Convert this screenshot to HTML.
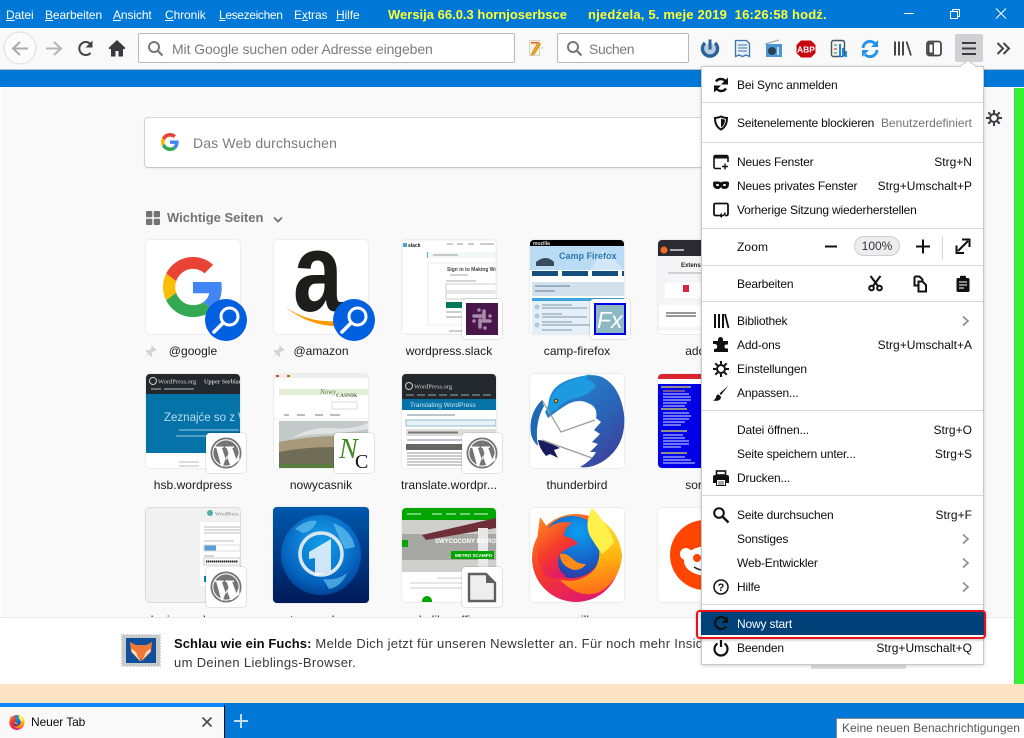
<!DOCTYPE html>
<html lang="de"><head><meta charset="utf-8"><title>Neuer Tab</title>
<style>
html,body{margin:0;padding:0;width:1024px;height:738px;overflow:hidden;background:#f9f9fa}
body{font-family:"Liberation Sans",sans-serif;font-size:12px;color:#0c0c0d;position:relative}
div,svg,span.a{position:absolute}
svg{overflow:visible;display:block}
.m{top:7px;height:16px;line-height:16px;color:#fff;white-space:nowrap;letter-spacing:-.1px}
.y{top:7px;height:16px;line-height:16px;color:#ffff33;font-weight:bold;font-size:13px;white-space:pre}
.box{background:#fff;border:1px solid #b8b8b8;border-radius:2px;box-sizing:border-box}
.ph{color:#7b7b80;font-size:14px;line-height:18px;white-space:nowrap}
.t{position:absolute;width:94px;height:94px;background:#fff;border-radius:4px;overflow:hidden;box-shadow:0 0 0 1px rgba(0,0,0,.05)}
.t svg{left:0;top:0;width:94px;height:94px}
.l{position:absolute;width:124px;text-align:center;white-space:nowrap;height:16px;line-height:16px;font-size:12px;letter-spacing:.03px;color:#1a1a1e}
.b{position:absolute;width:40px;height:40px;background:#fff;border-radius:4px;box-shadow:0 0 0 1px rgba(0,0,0,.09)}
.s{position:absolute;width:42px;height:42px;border-radius:50%;background:#0060df}
.i{left:8px;top:4px;width:32px;height:32px}
.r{left:36px;height:16px;line-height:16px;white-space:nowrap;letter-spacing:-.17px;font-size:12px}
.k{right:12px;height:16px;line-height:16px;white-space:nowrap;letter-spacing:.02px;font-size:12px}
.sep{left:1px;width:281px;height:1px;background:#d7d7db}
.ic{left:12px;width:16px;height:16px}
.ch{left:258px;width:12px;height:12px}
</style></head><body>
<svg width="0" height="0" style="position:absolute"><defs>
<symbol id="g" viewBox="0 0 48 48"><path fill="#EA4335" d="M24 9.5c3.54 0 6.71 1.22 9.21 3.6l6.85-6.85C35.9 2.38 30.47 0 24 0 14.62 0 6.51 5.38 2.56 13.22l7.98 6.19C12.43 13.72 17.74 9.5 24 9.5z"/><path fill="#4285F4" d="M46.98 24.55c0-1.57-.15-3.09-.38-4.55H24v9.02h12.94c-.58 2.96-2.26 5.48-4.78 7.18l7.73 6c4.51-4.18 7.09-10.36 7.09-17.65z"/><path fill="#FBBC05" d="M10.53 28.59c-.48-1.45-.76-2.99-.76-4.59s.27-3.14.76-4.59l-7.98-6.19C.92 16.46 0 20.12 0 24c0 3.88.92 7.54 2.56 10.78l7.97-6.19z"/><path fill="#34A853" d="M24 48c6.48 0 11.93-2.13 15.89-5.81l-7.73-6c-2.15 1.45-4.92 2.3-8.16 2.3-6.26 0-11.57-4.22-13.47-9.91l-7.98 6.19C6.51 42.62 14.62 48 24 48z"/></symbol>
<symbol id="mag" viewBox="0 0 42 42"><circle cx="24.5" cy="17.5" r="8.5" fill="none" stroke="#fff" stroke-width="3"/><path d="M18 24L9 33" stroke="#fff" stroke-width="3.6" stroke-linecap="round"/></symbol>
<symbol id="wp" viewBox="0 0 32 32"><circle cx="16" cy="16" r="15.5" fill="#757575"/><circle cx="16" cy="16" r="13.7" fill="#fff"/><circle cx="16" cy="16" r="12.6" fill="#757575"/><path d="M5 9.5h8.5v1.4h-1.6l4.2 12.4 2.4-7-1.9-5.4h-1.4V9.5H24v1.4h-1.8l4.2 11.4 3-7v8L22 29h-1.5L16.6 19 12.8 29.500h-1.500L6.300 10.900H5z" fill="#fff"/></symbol>
<symbol id="pin" viewBox="0 0 12 12"><path d="M6.500 0l5 5-1 1H9L7 8v3L6 12 3.500 9 0 12l3-3.800L0.500 6l1-1h3l2-2V1z" fill="#d4d4d8"/></symbol>
<symbol id="chev" viewBox="0 0 12 12"><path d="M4 1.500L9 6l-5 4.500" fill="none" stroke="#8a8a8e" stroke-width="1.600"/></symbol>
<linearGradient id="ffg" x1=".1" y1="0" x2=".6" y2="1"><stop offset="0" stop-color="#ff8a1f"/><stop offset=".55" stop-color="#f5392c"/><stop offset="1" stop-color="#e0186f"/></linearGradient>
<linearGradient id="ffy" x1=".4" y1="0" x2=".5" y2="1"><stop offset="0" stop-color="#fff34a"/><stop offset=".6" stop-color="#ffb40f"/><stop offset="1" stop-color="#ff6a1a"/></linearGradient>
<radialGradient id="ffb" cx=".6" cy=".25" r=".85"><stop offset="0" stop-color="#0d9ff0"/><stop offset=".6" stop-color="#1560c8"/><stop offset="1" stop-color="#372b92"/></radialGradient>
<linearGradient id="tbg" x1="0" y1="0" x2=".8" y2="1"><stop offset="0" stop-color="#1d8fd8"/><stop offset=".6" stop-color="#2a66b8"/><stop offset="1" stop-color="#3c3f9c"/></linearGradient>
<linearGradient id="tsg" x1="0" y1="0" x2="0" y2="1"><stop offset="0" stop-color="#0058ad"/><stop offset="1" stop-color="#001a59"/></linearGradient>
<radialGradient id="tsb" cx=".5" cy=".35" r=".7"><stop offset="0" stop-color="#19a8f0"/><stop offset=".7" stop-color="#0562bf"/><stop offset="1" stop-color="#003b8a"/></radialGradient>
<symbol id="ff" viewBox="0 0 94 94">
<circle cx="46" cy="50" r="44" fill="url(#ffg)"/>
<circle cx="42" cy="39" r="31" fill="url(#ffb)"/>
<path d="M62 0Q58 12 58 20 62 30 68 36 72 50 64 62 50 76 30 72 50 92 70 84 90 72 92 48 90 26 74 14 66 8 62 0z" fill="url(#ffy)"/>
<path d="M62 0Q54 16 60 28 66 38 72 46 80 40 84 34 78 16 62 0z" fill="#fff04a"/>
<path d="M8 24L10 9 18 20Q28 12 42 15 34 20 34 28 44 30 48 36 36 40 30 46 24 60 36 68 24 74 14 66 4 50 8 24z" fill="url(#ffg)"/>
<path d="M30 46Q30 58 44 62 52 62 56 56 48 56 44 52 36 44 30 46z" fill="#ff8b1a"/>
</symbol>
</defs></svg>

<!-- title bar -->
<div style="left:0;top:0;width:1024px;height:28px;background:#0078d7"></div>
<div class="m" style="left:6px"><u>D</u>atei</div>
<div class="m" style="left:45px"><u>B</u>earbeiten</div>
<div class="m" style="left:113px"><u>A</u>nsicht</div>
<div class="m" style="left:165px"><u>C</u>hronik</div>
<div class="m" style="left:219px;letter-spacing:-.35px"><u>L</u>esezeichen</div>
<div class="m" style="left:294px">E<u>x</u>tras</div>
<div class="m" style="left:336px"><u>H</u>ilfe</div>
<div class="y" style="left:388px">Wersija 66.0.3 hornjoserbsce</div>
<div class="y" style="left:588px;letter-spacing:.18px">njedźela, 5. meje 2019  16:26:58 hodź.</div>
<svg style="left:904px;top:8px" width="110" height="12"><path d="M0 5.500h10" stroke="#fff"/><path d="M46.500 3.500h7v7h-7zM48.500 3.500v-2h7v7h-2" fill="none" stroke="#fff"/><path d="M92 .5l10 10M102 .5l-10 10" stroke="#fff"/></svg>

<!-- toolbar -->
<div style="left:0;top:28px;width:1024px;height:41px;background:#f9f9fa"></div>
<div style="left:0;top:69px;width:1024px;height:1px;background:#bdbdbd"></div>
<svg style="left:0;top:28px" width="140" height="41">
<circle cx="20" cy="20" r="16" fill="#fbfbfb" stroke="#dcdcde"/>
<path d="M28 20.500H14M20 14l-7 6.500 7 6.500" fill="none" stroke="#a9a9ad" stroke-width="2"/>
<path d="M46 20.500h14M54 14l7 6.500-7 6.500" fill="none" stroke="#b5b5b8" stroke-width="2"/>
<path d="M90.500 25a6.500 6.500 0 1 1 0-9" fill="none" stroke="#434347" stroke-width="2"/><path d="M92.500 12.500v7h-7z" fill="#434347"/>
<path d="M117 12L108.500 20l1.500 1.500 1-1V28.500h4.500V23h3v5.500H123v-8l1 1 1.500-1.500z" fill="#38383d"/>
</svg>
<div class="box" style="left:138px;top:33px;width:377px;height:30px"></div>
<svg style="left:147px;top:40px" width="18" height="18"><circle cx="7" cy="7" r="5" fill="none" stroke="#77777b" stroke-width="2"/><path d="M10.500 10.500l5 5" stroke="#77777b" stroke-width="2.200"/></svg>
<div class="ph" style="left:172px;top:40px;letter-spacing:-.1px">Mit Google suchen oder Adresse eingeben</div>
<svg style="left:528px;top:39px" width="18" height="18"><path d="M1.500 1.500h10v15h-10z" fill="#f6f1e0" stroke="#d9d2bd"/><path d="M3 3h7v1.500H3z" fill="#e05b28"/><path d="M4 14L10 3.500l2.500 1.500L6.500 15l-3 1z" fill="#f4a623" stroke="#b87714" stroke-width=".6"/><path d="M13 8l3 1-3 1z" fill="#cfcfcf"/></svg>
<div class="box" style="left:557px;top:33px;width:132px;height:30px"></div>
<svg style="left:566px;top:40px" width="18" height="18"><circle cx="7" cy="7" r="5" fill="none" stroke="#77777b" stroke-width="2"/><path d="M10.500 10.500l5 5" stroke="#77777b" stroke-width="2.200"/></svg>
<div class="ph" style="left:589px;top:40px;letter-spacing:-.4px">Suchen</div>
<svg style="left:700px;top:36px" width="320" height="26">
<path d="M5 7a7.500 7.500 0 1 0 10 0" fill="none" stroke="#2a6496" stroke-width="3.500"/><circle cx="10" cy="13" r="5.500" fill="#3f7cb0" opacity=".35"/><path d="M10 3.500v10" stroke="#2a6496" stroke-width="3"/>
<path d="M35.500 4.500h11l3 3v13l-3.500-1.500-3.500 1.500-3.500-1.500-3.500 1.500z" fill="#e8f1fa" stroke="#3f73ad" stroke-width="1.300"/><path d="M38 9h9M38 12h9M38 15h9" stroke="#3f73ad"/>
<path d="M65 8l14-4" stroke="#a8a8ac" stroke-width="1.200"/><rect x="66" y="8" width="16" height="13" fill="#4b96d6"/><circle cx="72" cy="15" r="4" fill="#2d3f52"/><path d="M78 11v8" stroke="#fff" stroke-width="1.300"/>
<path d="M101 4.500h10l4.500 4.500v8l-4.500 4.500h-10l-4.500-4.500V9z" fill="#c8060d"/><text x="106" y="16.500" text-anchor="middle" font-family="Liberation Sans" font-weight="bold" font-size="8.500" fill="#fff">ABP</text>
<rect x="131.500" y="4.500" width="13" height="16" rx="2" fill="#f2f2f2" stroke="#45525f" stroke-width="1.400"/><path d="M134 9h3M134 17h3" stroke="#3aa84c" stroke-width="1.300"/><path d="M140 8v13M143 12v9M146 15v6" stroke="#1f87e0" stroke-width="2"/><path d="M134 13h3" stroke="#e2453a" stroke-width="1.300"/>
<path d="M163 12a7 7 0 0 1 12-4.500" fill="none" stroke="#2493e8" stroke-width="3"/><path d="M178 4v7h-7z" fill="#2493e8"/><path d="M177 14a7 7 0 0 1-12 4.500" fill="none" stroke="#2493e8" stroke-width="3"/><path d="M162 21v-7h7z" fill="#2493e8"/>
<path d="M195 5.500v14M199 5.500v14M203 5.500v14" stroke="#45454a" stroke-width="2"/><path d="M206.500 5.500l4.500 14" stroke="#45454a" stroke-width="1.800"/>
<rect x="227" y="5.500" width="14" height="14" rx="2.500" fill="#fff" stroke="#45454a" stroke-width="1.800"/><rect x="228" y="6.500" width="6" height="12" fill="#45454a"/><rect x="229.500" y="8.500" width="3" height="8" fill="#f9f9fa"/>
<rect x="255" y="-2" width="28" height="28" rx="2" fill="#d1d1d3"/>
<path d="M262 7h14M262 12.500h14M262 18h14" stroke="#3c3c40" stroke-width="2"/>
<path d="M297.500 7l5.500 5.500-5.500 5.500M303.500 7l5.500 5.500-5.500 5.500" fill="none" stroke="#45454a" stroke-width="2"/>
</svg>
<!-- blue strip -->
<div style="left:0;top:70px;width:1024px;height:17px;background:#0078d7"></div>

<!-- content -->
<div style="left:0;top:87px;width:1014px;height:530px;background:#f9f9fa;overflow:hidden;border-left:1px solid #fff;box-sizing:border-box"></div>
<div style="left:1014px;top:88px;width:10px;height:596px;background:#33f433;border-left:1px solid #55cc55;box-sizing:border-box"></div>
<div style="left:145px;top:118px;width:560px;height:49px;background:#fff;border-radius:3px;box-shadow:0 0 0 1px rgba(0,0,0,.12),0 1px 2px rgba(0,0,0,.15)"></div>
<svg style="left:161px;top:133px" width="18" height="18"><use href="#g" width="18" height="18"/></svg>
<div class="ph" style="left:193px;top:134px;letter-spacing:.14px">Das Web durchsuchen</div>
<svg style="left:986px;top:110px" width="16" height="16"><circle cx="8" cy="8" r="4" fill="none" stroke="#3a3a3e" stroke-width="2"/><path d="M8 0v3M8 13v3M0 8h3M13 8h3M2.300 2.300l2.200 2.200M11.500 11.500l2.200 2.200M13.700 2.300l-2.200 2.200M4.500 11.500l-2.200 2.200" stroke="#3a3a3e" stroke-width="2"/></svg>

<svg style="left:146px;top:211px" width="14" height="14"><rect width="6.300" height="6.300" rx="1" fill="#737373"/><rect x="7.700" width="6.300" height="6.300" rx="1" fill="#737373"/><rect y="7.700" width="6.300" height="6.300" rx="1" fill="#737373"/><rect x="7.700" y="7.700" width="6.300" height="6.300" rx="1" fill="#737373"/></svg>
<div style="left:167px;top:210px;height:16px;line-height:16px;font-weight:bold;font-size:13px;letter-spacing:-.02px;color:#737373;white-space:nowrap">Wichtige Seiten</div>
<svg style="left:273px;top:216px" width="10" height="8"><path d="M1 1.500l4 4 4-4" fill="none" stroke="#737373" stroke-width="1.800"/></svg>

<!-- row 1 -->
<div class="t" style="left:146px;top:240px"><svg viewBox="0 0 94 94"><use href="#g" x="17" y="17" width="60" height="60"/></svg></div>
<div class="s" style="left:205px;top:299px"><svg width="42" height="42"><use href="#mag" width="42" height="42"/></svg></div>
<svg style="left:145px;top:345px" width="12" height="12"><use href="#pin" width="12" height="12"/></svg>
<div class="l" style="left:131px;top:343px">@google</div>

<div class="t" style="left:274px;top:240px"><svg viewBox="0 0 94 94"><text x="0" y="0" transform="translate(19,71) scale(.8,1)" font-family="Liberation Sans" font-weight="bold" font-size="112" fill="#1d1d1b">a</text><path d="M11 67Q39 89 73 86l2-7Q41 87 11 67z" fill="#f90"/></svg></div>
<div class="s" style="left:333px;top:299px"><svg width="42" height="42"><use href="#mag" width="42" height="42"/></svg></div>
<svg style="left:273px;top:345px" width="12" height="12"><use href="#pin" width="12" height="12"/></svg>
<div class="l" style="left:259px;top:343px">@amazon</div>

<div class="t" style="left:402px;top:240px"><svg viewBox="0 0 94 94" style="filter:blur(.3px)">
<rect x="1" y="3" width="4" height="4" fill="#3aa7c9"/><text x="6" y="7" font-family="Liberation Sans" font-weight="bold" font-size="5" fill="#222">slack</text>
<path d="M45 4h6M55 4h6M66 4h6M78 4h14" stroke="#999" stroke-width="1"/>
<rect x="26" y="12" width="68" height="6" fill="#f2f7fa"/><rect x="25" y="12" width="1" height="6" fill="#55b4d6"/><path d="M31 15h25" stroke="#999"/>
<rect x="26" y="23" width="68" height="62" fill="#fff" stroke="#eee"/>
<text x="45" y="31" font-family="Liberation Sans" font-weight="bold" font-size="5" fill="#444">Sign in to Making WordPress</text>
<path d="M48 35h18M44 41h30" stroke="#aaa"/><rect x="44" y="44" width="50" height="7" fill="#fff" stroke="#ccc"/><rect x="44" y="53" width="50" height="6" fill="#fff" stroke="#ccc"/>
<rect x="44" y="62" width="22" height="6" fill="#007a5a"/><path d="M44 72h15M44 77h20M47 91h14" stroke="#999"/><rect x="0" y="0" width="94" height="94" fill="none" stroke="#eee"/></svg></div>
<div class="b" style="left:462px;top:299px"><svg class="i" viewBox="0 0 32 32" style="top:4px;left:4px"><rect width="32" height="32" fill="#4a154b"/><g stroke="#a78ba8" stroke-width="3.500" stroke-linecap="round"><path d="M8 13h8M13 7v0M18 8v7M24 13v0M24 18h-8M19 25v0M14 24v-7M8 18v0"/></g></svg></div>
<div class="l" style="left:387px;top:343px">wordpress.slack</div>

<div class="t" style="left:530px;top:240px"><svg viewBox="0 0 94 94" style="filter:blur(.3px)">
<rect width="94" height="6" fill="#000"/><text x="3" y="5" font-family="Liberation Sans" font-weight="bold" font-size="5" fill="#ddd">mozilla</text>
<rect y="6" width="94" height="24" fill="#b9dcf4"/><path d="M60 30l14-20 20 20z" fill="#d2e8f8"/><text x="29" y="19" font-family="Liberation Sans" font-weight="bold" font-size="9" fill="#2f78ad">Camp Firefox</text>
<path d="M6 22q10-8 18 0v4H6z" fill="#3a4b5e"/>
<rect x="2" y="31" width="26" height="5" fill="#154f80"/><rect x="32" y="31" width="26" height="5" fill="#154f80"/><rect x="62" y="31" width="26" height="5" fill="#154f80"/><rect x="92" y="31" width="4" height="5" fill="#154f80"/>
<rect x="2" y="42" width="92" height="14" fill="#d3e1ed"/><path d="M5 46h35M5 51h20" stroke="#5f7d95"/>
<rect x="2" y="58" width="92" height="3" fill="#3ca3e0"/><rect x="2" y="61" width="92" height="33" fill="#e5eff7"/><path d="M12 65h30M12 68h45M12 74h20M12 77h45M12 82h30M12 85h50M12 90h30" stroke="#7f95a8"/><circle cx="7" cy="67" r="2.500" fill="#b5c7d6"/><circle cx="7" cy="76" r="2.500" fill="#b5c7d6"/><circle cx="7" cy="85" r="2.500" fill="#b5c7d6"/></svg></div>
<div class="b" style="left:590px;top:299px"><svg class="i" viewBox="0 0 32 32" style="top:4px;left:4px"><rect width="32" height="32" fill="#0000e6"/><rect x="2" y="2" width="28" height="28" fill="#8eb9c3"/><text x="3" y="25" font-family="Liberation Sans" font-style="italic" font-size="23" fill="#fff">Fx</text></svg></div>
<div class="l" style="left:515px;top:343px">camp-firefox</div>

<div class="t" style="left:658px;top:240px"><svg viewBox="0 0 94 94" style="filter:blur(.3px)"><rect width="94" height="94" fill="#f5f5f7"/><rect width="94" height="16" fill="#2b2a33"/><circle cx="6" cy="10" r="3.500" fill="#f66a1d"/><path d="M12 10h14" stroke="#ddd" stroke-width="1.500"/>
<text x="23" y="27" font-family="Liberation Sans" font-weight="bold" font-size="6" fill="#222">Extensions</text><path d="M10 33h50" stroke="#aaa"/><rect x="7" y="43" width="80" height="15" fill="#fff"/><rect x="25" y="45" width="6" height="7" fill="#d7263d"/><rect x="1" y="65" width="93" height="22" fill="#fff"/><path d="M8 73h30M8 76h30" stroke="#333"/><rect x="1" y="90" width="93" height="4" fill="#fff"/></svg></div>
<div class="l" style="left:643px;top:343px">addons</div>

<!-- row 2 -->
<div class="t" style="left:146px;top:374px"><svg viewBox="0 0 94 94" style="filter:blur(.3px)"><rect width="94" height="20" fill="#23282d"/><circle cx="7" cy="7" r="3.500" fill="none" stroke="#ccc"/><text x="12" y="9.500" font-family="Liberation Serif" font-size="6.500" fill="#ccc">WordPress.org</text><text x="58" y="9.500" font-family="Liberation Serif" font-size="6" font-weight="bold" fill="#bbb">Upper Sorbian</text><path d="M5 15h10M18 15h30" stroke="#bbb"/>
<rect y="20" width="94" height="59" fill="#0573a8"/><text x="18" y="47" font-family="Liberation Sans" font-size="11.500" fill="#b6dcf0">Zeznajće so z W</text><path d="M33 56h60M30 62h62" stroke="#9fcbe3"/><path d="M33 88h20M33 92h20" stroke="#bbb"/></svg></div>
<div class="b" style="left:206px;top:433px"><svg width="32" height="32" style="left:4px;top:4px"><use href="#wp" width="32" height="32"/></svg></div>
<div class="l" style="left:131px;top:477px">hsb.wordpress</div>

<div class="t" style="left:274px;top:374px"><svg viewBox="0 0 94 94" style="filter:blur(.3px)"><rect width="94" height="4" fill="#eee"/><rect x="2" y="1" width="3" height="2" fill="#d44"/><rect x="13" y="1" width="3" height="2" fill="#c60"/>
<rect x="5" y="15" width="89" height="6" fill="#e4efd9"/><text x="46" y="20" font-family="Liberation Serif" font-style="italic" font-size="7" fill="#5f7a45">Nowy</text><text x="62" y="23" font-family="Liberation Serif" font-size="5.500" font-weight="bold" fill="#506a3a">CASNIK</text>
<rect x="58" y="28" width="25" height="7" fill="#fff" stroke="#ddd"/><path d="M10 41h5M23 41h8M41 41h8M56 41h10" stroke="#777"/><path d="M0 45h94" stroke="#eee"/>
<rect x="5" y="47" width="89" height="47" fill="#c3c9c9"/><path d="M18 64q20-12 40-10t36-5v6q-30 5-45 5t-31 4z" fill="#eeeeee" opacity=".7"/><path d="M5 68q40-8 89-6v32H5z" fill="#a8997a"/><path d="M5 78q40-8 89-3v19H5z" fill="#6f6c58"/><path d="M5 90h89v4H5z" fill="#5a7d3f"/></svg></div>
<div class="b" style="left:334px;top:433px"><svg width="32" height="32" style="left:4px;top:4px"><text x="1" y="21" font-family="Liberation Serif" font-style="italic" font-size="28" fill="#3f8a1f">N</text><text x="17" y="31" font-family="Liberation Serif" font-size="20" fill="#111">C</text></svg></div>
<div class="l" style="left:259px;top:477px">nowycasnik</div>

<div class="t" style="left:402px;top:374px"><svg viewBox="0 0 94 94" style="filter:blur(.3px)"><rect width="94" height="25" fill="#23282d"/><circle cx="7" cy="12" r="3.500" fill="none" stroke="#ccc"/><text x="12" y="14.500" font-family="Liberation Serif" font-size="6.500" fill="#ccc">WordPress.org</text><path d="M4 21h88" stroke="#9aa" stroke-dasharray="8 3"/>
<rect y="25" width="94" height="11" fill="#0573a8"/><text x="8" y="33" font-family="Liberation Sans" font-size="6.500" fill="#cfe7f3">Translating WordPress</text>
<path d="M5 41h48" stroke="#789"/><rect x="4" y="46" width="90" height="6" fill="#e9f2f7" stroke="#8bc"/><rect x="4" y="55" width="90" height="7" fill="#ddd"/><path d="M6 58.500h50" stroke="#777" stroke-width="2"/><path d="M5 66h60" stroke="#78a"/><rect x="4" y="70" width="90" height="6" fill="#666"/><path d="M5 79h85M5 82h85M5 85h85M5 88h85M5 91h60" stroke="#999"/></svg></div>
<div class="b" style="left:462px;top:433px"><svg width="32" height="32" style="left:4px;top:4px"><use href="#wp" width="32" height="32"/></svg></div>
<div class="l" style="left:387px;top:477px">translate.wordpr...</div>

<div class="t" style="left:530px;top:374px;overflow:visible"><svg viewBox="0 0 94 94">
<path d="M38 6Q60-2 72 3 90 12 94 40 97 70 75 86 62 95 50 93 62 86 66 78L60 78 68 70 62 68 70 60 64 56 71 48 66 44Q68 34 60 30 50 24 38 30 28 36 18 44L15 38Q18 34 19 26 22 12 38 6z" fill="url(#tbg)"/>
<path d="M12 26Q-2 40 1 60 3 68 8 72 4 50 14 32z" fill="#1f6ab5"/>
<path d="M19 30Q24 10 48 4L60 0 56 5Q62 6 66 12 58 22 42 25 32 28 26 36L17 40z" fill="#1d9ae0"/>
<path d="M8 66Q14 66 30 74L24 76 28 84 20 80 16 82Q9 74 8 66z" fill="#1a1a5e"/>
<path d="M12 26L31 58 65 46M12 66l50 18" fill="none" stroke="#9a9a9a" stroke-width="1.200"/>
<circle cx="26" cy="27" r="1.800" fill="#f0b23a" stroke="#222" stroke-width=".8"/></svg></div>
<div class="l" style="left:515px;top:477px">thunderbird</div>

<div class="t" style="left:658px;top:374px"><svg viewBox="0 0 94 94" style="filter:blur(.25px)"><rect width="94" height="94" fill="#0000e8"/><rect width="94" height="5" fill="#d8262c"/><rect y="5" width="94" height="5" fill="#fff"/>
<path d="M3 13h30M3 35h26M3 57h26M3 79h26" stroke="#e6e64d" stroke-width="1.300"/><path d="M5 17h22" stroke="#e6a34d"/><path d="M5 20h26M5 23h28M5 26h28M5 29h24M5 32h22M5 39h26M5 42h28M5 45h26M5 48h22M5 51h18M5 61h20M5 64h22M5 67h26M5 70h26M5 73h18M5 83h22M5 86h28M5 89h32" stroke="#dfe3ff" stroke-width="1"/></svg></div>
<div class="l" style="left:643px;top:477px">sorbian</div>

<!-- row 3 -->
<div class="t" style="left:146px;top:508px;box-shadow:0 0 0 1px rgba(0,0,0,.12)"><svg viewBox="0 0 94 94" style="filter:blur(.3px)"><rect width="94" height="94" fill="#f1f1f1"/><circle cx="64" cy="5" r="3" fill="#5aa"/><text x="69" y="7.500" font-family="Liberation Serif" font-size="5.500" fill="#888">WordPress</text>
<rect x="54" y="14" width="40" height="64" fill="#fff"/><path d="M58 19h36M58 22h36M58 25h36M58 33h30" stroke="#bbb"/><rect x="58" y="37" width="12" height="6" fill="#5b9dd9"/><rect x="58" y="37" width="36" height="6" fill="none" stroke="#ddd"/><path d="M58 48h10" stroke="#aaa"/><rect x="58" y="50" width="36" height="7" fill="#fff" stroke="#ccc"/><path d="M60 53.500h32" stroke="#222" stroke-width="2" stroke-dasharray="1.500 .5"/><rect x="58" y="68" width="10" height="6" fill="#0085ba"/></svg></div>
<div class="b" style="left:206px;top:567px"><svg width="32" height="32" style="left:4px;top:4px"><use href="#wp" width="32" height="32"/></svg></div>
<div class="l" style="left:131px;top:612px">login.wordpress</div>

<div class="t" style="left:273px;top:507px;width:96px;height:96px"><svg viewBox="0 0 96 96" style="width:96px;height:96px"><rect width="96" height="96" fill="url(#tsg)"/><circle cx="48" cy="48" r="40" fill="url(#tsb)"/><path d="M22 22q12-10 22-8-4 10-14 12zM60 16q18 6 22 24l-10 2-6-12zM50 72q14 2 24-6-6 14-18 16z" fill="#64c0f0" opacity=".7"/><circle cx="48" cy="47" r="21" fill="#0a84d8" fill-opacity=".4" stroke="#d8e6f2" stroke-width="3.500"/><path d="M36 45l22-13v32l-16 5V51l-6 1z" fill="#fff" opacity=".8"/></svg></div>
<div class="l" style="left:259px;top:612px">tagesschau</div>

<div class="t" style="left:402px;top:508px"><svg viewBox="0 0 94 94" style="filter:blur(.3px)"><rect width="94" height="12" fill="#00a500"/><path d="M5 6h14M30 6h10M44 6h10M58 6h10M72 6h14" stroke="#dfd"/><rect y="12" width="94" height="52" fill="#cfcfcc"/><rect y="26" width="94" height="26" fill="#a7a7a3"/><path d="M20 27l74-17v10L24 32z" fill="#6f2f38"/><path d="M76 20h10v44H76z" fill="#e8e8e8"/><text x="33" y="35" font-family="Liberation Sans" font-weight="bold" font-size="6" fill="#fff">SWYCOCONY BIUROWY P</text><rect x="49" y="43" width="43" height="8" fill="#00a500"/><text x="53" y="49" font-family="Liberation Sans" font-weight="bold" font-size="4.500" fill="#fff">METRO SCAMPO</text><rect y="32" width="6" height="7" fill="#00a500"/><path d="M35 70h28M8 75h78M8 80h78" stroke="#ccc"/><circle cx="25" cy="93" r="5" fill="#00a500"/></svg></div>
<div class="b" style="left:462px;top:567px"><svg width="32" height="32" style="left:4px;top:4px"><path d="M3 3h17l9 9v18H3z" fill="#eee" stroke="#5f5f5f" stroke-width="2.400"/><path d="M20 2l10 10H20z" fill="#5f5f5f"/></svg></div>
<div class="l" style="left:387px;top:612px">de.libreoffice</div>

<div class="t" style="left:530px;top:508px;overflow:visible"><svg viewBox="0 0 94 94"><use href="#ff" width="94" height="94"/></svg></div>
<div class="l" style="left:515px;top:612px">mozilla</div>

<div class="t" style="left:658px;top:508px"><svg viewBox="0 0 94 94"><circle cx="47" cy="47" r="35" fill="#ff4500"/><ellipse cx="50" cy="53" rx="24" ry="15" fill="#fff"/><circle cx="28" cy="46" r="6" fill="#fff"/><circle cx="39" cy="50" r="4" fill="#ff4500"/><path d="M36 59q6 4 12 3" fill="none" stroke="#222" stroke-width="1.500"/></svg></div>

<!-- snippet -->
<div style="left:0;top:617px;width:1014px;height:67px;background:#fff;border-top:1px solid #e8e8ea;box-sizing:border-box"></div>
<svg style="left:121px;top:634px" width="40" height="33"><rect x="0" y="0" width="40" height="33" fill="#c9c9c9"/><path d="M1 .5h38M39.500 1v31M39 32.500H1M.5 32V1" stroke="#fff" stroke-width="1" stroke-dasharray="1.500 1.500"/><rect x="5" y="4" width="30" height="25" fill="#0f4f9c"/><path d="M9 8l6 3h10l6-3-1 10-9 9h-2l-9-9z" fill="#f0793a"/><path d="M10 15q5 1 7 8l3 4 3-4q2-7 7-8l-1 3-9 9h-1l-8-9z" fill="#fbe3c2"/><path d="M19 25h2l-1 2z" fill="#523"/></svg>
<div style="left:174px;top:635px;height:17px;line-height:17px;font-size:13px;white-space:nowrap;color:#38383d;letter-spacing:.32px;width:527px;overflow:hidden"><b style="color:#0c0c0d;letter-spacing:.08px">Schlau wie ein Fuchs:</b> Melde Dich jetzt für unseren Newsletter an. Für noch mehr Insider-Wissen</div>
<div style="left:174px;top:654px;height:17px;line-height:17px;font-size:13px;white-space:nowrap;color:#38383d;letter-spacing:.34px">um Deinen Lieblings-Browser.</div>
<div style="left:811px;top:650px;width:95px;height:19px;background:#dcdcde;border-radius:2px"></div>

<!-- peach + tab strip -->
<div style="left:0;top:684px;width:1024px;height:19px;background:#fde2c4"></div>
<div style="left:0;top:703px;width:1024px;height:35px;background:#0078d7"></div>
<div style="left:0;top:703px;width:224px;height:4px;background:#0a84ff"></div>
<div style="left:0;top:707px;width:224px;height:31px;background:#f9f9fa"></div>
<div style="left:224px;top:705px;width:1px;height:33px;background:#0c0c0d"></div>
<svg style="left:9px;top:714px" width="16" height="16"><use href="#ff" width="16" height="16"/></svg>
<div style="left:31px;top:714px;height:16px;line-height:16px;white-space:nowrap;letter-spacing:-.1px">Neuer Tab</div>
<svg style="left:202px;top:717px" width="10" height="10"><path d="M.5.5l9 9M9.500.5l-9 9" stroke="#4a4a4f" stroke-width="1.600"/></svg>
<svg style="left:234px;top:714px" width="14" height="14"><path d="M7 0v14M0 7h14" stroke="#bfe0fa" stroke-width="2"/></svg>

<!-- tooltip -->
<div style="left:836px;top:718px;width:188px;height:20px;background:#fff;border:1px solid #8a8a8a;box-sizing:border-box;border-right:none;border-bottom:none"></div>
<div style="left:842px;top:720px;height:16px;line-height:16px;color:#575757;white-space:nowrap;letter-spacing:.04px">Keine neuen Benachrichtigungen</div>

<!-- menu -->
<div style="left:701px;top:66px;width:283px;height:599px;background:#fff;box-shadow:inset 0 0 0 1px #c8c8cc,0 1px 4px rgba(0,0,0,.16)">
<svg style="left:258px;top:-6px" width="18" height="8"><path d="M0 8l9-7.500L18 8z" fill="#fff"/><path d="M0 7L9 .5l9 6.500" fill="none" stroke="#c8c8cc"/></svg>

<svg class="ic" style="top:11px"><path d="M13.500 6A6 6 0 0 0 3 4.500M2.500 10A6 6 0 0 0 13 11.500" fill="none" stroke="#111" stroke-width="2.400"/><path d="M15 0.500v7H8zM1 15.500v-7h7z" fill="#111"/></svg>
<div class="r" style="top:11px">Bei Sync anmelden</div>
<div class="sep" style="top:36px"></div>

<svg class="ic" style="top:49px"><path d="M8 1.500q3 1.500 6 1.500 0 8.500-6 11.500Q2 11.500 2 3q3 0 6-1.500z" fill="none" stroke="#111" stroke-width="2"/><path d="M8 3.500q2 1 4 1 0 5.500-4 8z" fill="#111"/></svg>
<div class="r" style="top:49px">Seitenelemente blockieren</div>
<div class="k" style="top:49px;color:#737373;letter-spacing:.02px">Benutzerdefiniert</div>
<div class="sep" style="top:76px"></div>

<svg class="ic" style="top:88px"><path d="M8 14.500H2.500a1.500 1.500 0 0 1-1.500-1.500V3a1.500 1.500 0 0 1 1.500-1.500h11A1.500 1.500 0 0 1 15 3v5" fill="none" stroke="#111" stroke-width="1.600"/><rect x="1" y="2" width="14" height="2.500" fill="#111"/><path d="M12 9.500v6M9 12.500h6" stroke="#111" stroke-width="1.400"/></svg>
<div class="r" style="top:88px">Neues Fenster</div><div class="k" style="top:88px">Strg+N</div>

<svg class="ic" style="top:112px"><path d="M0 5q0-1.500 2-1.500h3q2 0 3 1 1-1 3-1h3q2 0 2 1.500 0 3.500-1 4.500-1 1.500-4 1.500Q9 11 8 9q-1 2-3 2-3 0-4-1.500Q0 8.500 0 5z" fill="#111"/><ellipse cx="4.500" cy="7" rx="1.500" ry="1" fill="#fff"/><ellipse cx="11.500" cy="7" rx="1.500" ry="1" fill="#fff"/></svg>
<div class="r" style="top:112px">Neues privates Fenster</div><div class="k" style="top:112px">Strg+Umschalt+P</div>

<svg class="ic" style="top:136px"><path d="M6 13.500H2.500A1.500 1.500 0 0 1 1 12V3a1.500 1.500 0 0 1 1.500-1.500h11A1.500 1.500 0 0 1 15 3v9a1.500 1.500 0 0 1-1.500 1.500H12" fill="none" stroke="#111" stroke-width="1.800"/><path d="M12 10.500a3 3 0 0 1-4 3" fill="none" stroke="#111" stroke-width="1.500"/><path d="M5.500 13.500l3.500-2.500v5z" fill="#111"/></svg>
<div class="r" style="top:136px">Vorherige Sitzung wiederherstellen</div>
<div class="sep" style="top:162px"></div>

<div class="r" style="top:173px;letter-spacing:.1px">Zoom</div>
<svg style="left:124px;top:170px;width:150px;height:24px;position:absolute" width="150" height="24"><path d="M0 10.500h12" stroke="#111" stroke-width="2"/><path d="M91 10.500h14M98 3.500v14" stroke="#111" stroke-width="2"/><path d="M117.500 0v24" stroke="#d7d7db"/><path d="M133 15l10-10" stroke="#111" stroke-width="2"/><path d="M137 3.500h7.500V11M131.500 9.500V17H139" fill="none" stroke="#111" stroke-width="2"/></svg>
<div style="left:153px;top:170px;width:46px;height:20px;background:#ededf0;border:1px solid #cfcfd3;border-radius:10px;box-sizing:border-box;text-align:center;line-height:18px;font-size:12px;color:#333">100%</div>
<div class="sep" style="top:199px"></div>

<div class="r" style="top:210px">Bearbeiten</div>
<svg style="left:168px;top:209px;position:absolute" width="104" height="18"><g fill="none" stroke="#111" stroke-width="2"><circle cx="2.500" cy="13" r="2.300"/><circle cx="10.500" cy="13" r="2.300"/></g><path d="M1.500 1l7.500 10M11.500 1L4 11" stroke="#111" stroke-width="2"/>
<path d="M45.500 1.500h5l3 3V9M45.500 1.500v9h4" fill="none" stroke="#111" stroke-width="2"/><path d="M49.500 6.500h4L57 10v6.500h-7.500z" fill="#fff" stroke="#111" stroke-width="2"/>
<path d="M89 3h10a1.500 1.500 0 0 1 1.500 1.500v11a1.500 1.500 0 0 1-1.500 1.500H89a1.500 1.500 0 0 1-1.500-1.500v-11A1.500 1.500 0 0 1 89 3z" fill="#111"/><rect x="91" y=".8" width="6" height="3.500" rx="1" fill="#111"/><path d="M90 7h8M90 10h8M90 13h5" stroke="#fff"/></svg>
<div class="sep" style="top:235px"></div>

<svg class="ic" style="top:247px"><path d="M2 1v14M6 1v14M10 1v14" stroke="#111" stroke-width="2"/><path d="M12 1l3.500 14" stroke="#111" stroke-width="1.800"/></svg>
<div class="r" style="top:247px">Bibliothek</div><svg class="ch" style="top:249px"><use href="#chev" width="12" height="12"/></svg>

<svg class="ic" style="top:271px"><path d="M5 3.500a2.500 2.500 0 0 1 5 0V5h5v3.500h-1.500a2 2 0 0 0 0 4H15V16H1v-3h.8a2.500 2.500 0 0 0 0-5H0V5h5z" fill="#111" transform="translate(0,-1)"/></svg>
<div class="r" style="top:271px">Add-ons</div><div class="k" style="top:271px">Strg+Umschalt+A</div>

<svg class="ic" style="top:295px"><circle cx="8" cy="8" r="4" fill="none" stroke="#111" stroke-width="2"/><path d="M8 0v3M8 13v3M0 8h3M13 8h3M2.300 2.300l2.200 2.200M11.500 11.500l2.200 2.200M13.700 2.300l-2.200 2.200M4.500 11.500l-2.200 2.200" stroke="#111" stroke-width="2"/></svg>
<div class="r" style="top:295px">Einstellungen</div>

<svg class="ic" style="top:319px"><path d="M15.500 0.500L6.500 8.500l1.500 1.500z" fill="#111"/><path d="M5.500 9.500q-2 0-2.500 2.500-.5 2.500-3 3.500 5 1 7-1 1.500-1.500 .5-3.500z" fill="#111"/></svg>
<div class="r" style="top:319px">Anpassen...</div>
<div class="sep" style="top:344px"></div>

<div class="r" style="top:356px">Datei öffnen...</div><div class="k" style="top:356px">Strg+O</div>
<div class="r" style="top:380px">Seite speichern unter...</div><div class="k" style="top:380px">Strg+S</div>
<svg class="ic" style="top:404px"><rect x="3.500" y="1" width="9" height="4" fill="#fff" stroke="#111" stroke-width="1.600"/><path d="M2 5h12a2 2 0 0 1 2 2v6h-3v-3H3v3H0V7a2 2 0 0 1 2-2z" fill="#111"/><rect x="3.500" y="9.500" width="9" height="6" fill="#fff" stroke="#111"/><path d="M5 12h6M5 14h6" stroke="#111" stroke-width=".8"/></svg>
<div class="r" style="top:404px">Drucken...</div>
<div class="sep" style="top:429px"></div>

<svg class="ic" style="top:441px"><circle cx="6" cy="6" r="4.800" fill="none" stroke="#111" stroke-width="2"/><path d="M9.500 9.500l6 6" stroke="#111" stroke-width="2.400"/></svg>
<div class="r" style="top:441px">Seite durchsuchen</div><div class="k" style="top:441px">Strg+F</div>
<div class="r" style="top:465px">Sonstiges</div><svg class="ch" style="top:467px"><use href="#chev" width="12" height="12"/></svg>
<div class="r" style="top:489px">Web-Entwickler</div><svg class="ch" style="top:491px"><use href="#chev" width="12" height="12"/></svg>
<svg class="ic" style="top:513px"><circle cx="8" cy="8" r="7" fill="none" stroke="#111" stroke-width="1.500"/><text x="8" y="12" text-anchor="middle" font-family="Liberation Sans" font-weight="bold" font-size="11" fill="#111">?</text></svg>
<div class="r" style="top:513px">Hilfe</div><svg class="ch" style="top:515px"><use href="#chev" width="12" height="12"/></svg>
<div class="sep" style="top:538px"></div>

<div style="left:0;top:545px;width:283px;height:24px;background:#00417a"></div>
<svg class="ic" style="top:549px"><path d="M13 11.500a6 6 0 1 1 0-7" fill="none" stroke="#111" stroke-width="2.200"/><path d="M15 1.500V8H8.500z" fill="#111"/></svg>
<div class="r" style="top:550px;color:#fff">Nowy start</div>
<div class="r" style="top:574px">Beenden</div><div class="k" style="top:574px">Strg+Umschalt+Q</div>
<svg class="ic" style="top:574px"><path d="M4.500 3.500a6.500 6.500 0 1 0 7 0M8 0v7" fill="none" stroke="#111" stroke-width="2.200"/></svg>
</div>
<div style="left:696px;top:610px;width:290px;height:29px;border:2px solid #e8111a;border-radius:4px;box-sizing:border-box;box-shadow:0 1px 3px rgba(0,0,0,.25)"></div>
</body></html>
